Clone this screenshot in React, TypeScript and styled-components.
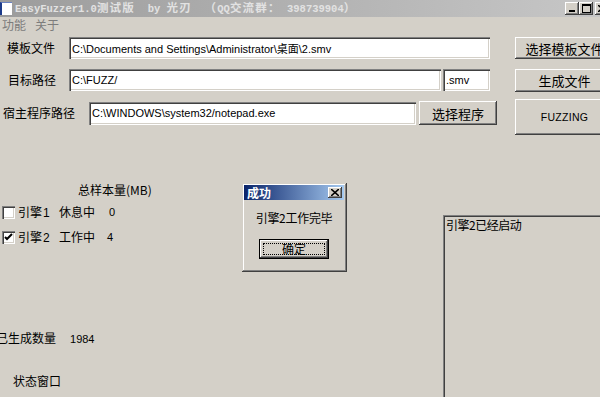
import React from "react";
import styled, { createGlobalStyle } from "styled-components";

const CJK = `"Noto Sans CJK SC", "Liberation Sans", sans-serif`;
const LATIN = `"Liberation Sans", "Noto Sans CJK SC", sans-serif`;

const GlobalStyle = createGlobalStyle`
  html, body { margin: 0; padding: 0; background: #d4d0c8; overflow: hidden; }
  body { font-family: ${LATIN}; }
  * { box-sizing: border-box; }
`;

const Window = styled.div`
  position: relative;
  width: 620px;
  height: 397px;
  overflow: hidden;
  background: #d4d0c8;
  display: flex;
  flex-direction: column;
  font-family: ${CJK};
  font-size: 12px;
  color: #000;
`;

const TitleBar = styled.div`
  height: 17px;
  flex: none;
  display: flex;
  align-items: center;
  padding-right: 11px;
  background: linear-gradient(to right, #9c9c9c, #c8c8c8);
`;

const AppIcon = styled.div`
  width: 12px;
  height: 13px;
  background: #fff;
  border-left: 2px solid #1c3a8a;
  border-top: 1px solid #6a82c0;
  flex: none;
`;

const TitleText = styled.span`
  margin-left: 3px;
  flex: 1;
  font-family: "Liberation Mono", "Noto Sans CJK SC", monospace;
  font-weight: bold;
  font-size: 10.5px;
  line-height: 17px;
  color: #e2e2e2;
  white-space: pre;
`;

const TitleHan = styled.span`
  font-family: "Noto Sans CJK SC", sans-serif;
  font-size: 11.5px;
  letter-spacing: 1.2px;
`;

const CaptionButtons = styled.div`
  display: flex;
  align-items: center;
`;

const CaptionButton = styled.div<{ $gap?: number }>`
  width: 14px;
  height: 13px;
  margin-left: ${(p) => p.$gap ?? 0}px;
  background: #d4d0c8;
  box-shadow: inset -1px -1px #404040, inset 1px 1px #fff, inset -2px -2px #808080;
  display: flex;
  align-items: center;
  justify-content: center;
`;

const MenuBar = styled.div`
  height: 15px;
  flex: none;
  display: flex;
  align-items: center;
  padding-left: 2px;
  gap: 9px;
  font-size: 12px;
  color: #7c7c7c;
`;

const MenuItem = styled.span`
  line-height: 15px;
`;

const TopArea = styled.div`
  display: flex;
  margin-top: 5px;
  height: 98px;
  flex: none;
`;

const LeftForm = styled.div`
  width: 515px;
  display: flex;
  flex-direction: column;
`;

const FormRow = styled.div<{ $top: number; $h: number }>`
  display: flex;
  align-items: center;
  margin-top: ${(p) => p.$top}px;
  height: ${(p) => p.$h}px;
`;

const Label = styled.span<{ $w: number; $pl: number }>`
  width: ${(p) => p.$w}px;
  padding-left: ${(p) => p.$pl}px;
  flex: none;
  font-size: 12px;
  line-height: 16px;
  white-space: nowrap;
`;

const TextBox = styled.div<{ $w: number; $h?: number; $ml?: number }>`
  width: ${(p) => p.$w}px;
  height: ${(p) => p.$h ?? 22}px;
  margin-left: ${(p) => p.$ml ?? 0}px;
  flex: none;
  background: #fff;
  box-shadow: inset 1px 1px #808080, inset 2px 2px #404040, inset -1px -1px #fff,
    inset -2px -2px #d4d0c8;
  padding: 0 3px;
  display: flex;
  align-items: center;
  font-family: ${LATIN};
  font-size: 11px;
  white-space: nowrap;
  overflow: hidden;
`;

const WinButton = styled.div<{ $w: number; $h: number; $ml?: number; $mt?: number; $latin?: boolean }>`
  width: ${(p) => p.$w}px;
  height: ${(p) => p.$h}px;
  margin-left: ${(p) => p.$ml ?? 0}px;
  margin-top: ${(p) => p.$mt ?? 0}px;
  flex: none;
  background: #d4d0c8;
  box-shadow: inset -1px -1px #404040, inset 1px 1px #fff, inset -2px -2px #808080;
  display: flex;
  align-items: center;
  justify-content: center;
  font-family: ${(p) => (p.$latin ? LATIN : CJK)};
  font-size: ${(p) => (p.$latin ? "10.5px" : "13px")};
  letter-spacing: ${(p) => (p.$latin ? "0.3px" : "0")};
  white-space: nowrap;
`;

const RightButtons = styled.div`
  display: flex;
  flex-direction: column;
`;

const LowerArea = styled.div`
  display: flex;
  flex: 1;
  min-height: 0;
`;

const LeftPanel = styled.div`
  width: 443px;
  flex: none;
  display: flex;
  flex-direction: column;
`;

const PlainLine = styled.div<{ $top: number; $pl: number; $ml?: number }>`
  margin-top: ${(p) => p.$top}px;
  margin-left: ${(p) => p.$ml ?? 0}px;
  padding-left: ${(p) => p.$pl}px;
  height: 16px;
  line-height: 16px;
  font-size: 12px;
  white-space: nowrap;
`;

const Num = styled.span<{ $ml: number }>`
  margin-left: ${(p) => p.$ml}px;
  font-family: ${LATIN};
  font-size: 11px;
`;

const EngineRow = styled.div<{ $top: number }>`
  margin-top: ${(p) => p.$top}px;
  height: 20px;
  display: flex;
  align-items: center;
  padding-left: 2px;
  white-space: nowrap;
`;

const CheckBox = styled.div`
  width: 13px;
  height: 13px;
  flex: none;
  background: #fff;
  box-shadow: inset 1px 1px #808080, inset 2px 2px #404040, inset -1px -1px #fff,
    inset -2px -2px #d4d0c8;
  display: flex;
  align-items: center;
  justify-content: center;
`;

const Cell = styled.span<{ $w: number; $ml?: number }>`
  width: ${(p) => p.$w}px;
  margin-left: ${(p) => p.$ml ?? 0}px;
  flex: none;
  font-size: 12px;
  line-height: 16px;
`;

const Digit = styled.span`
  font-family: ${LATIN};
  font-size: 12px;
  margin-left: 1px;
`;

const LogPanel = styled.div`
  margin-top: 80px;
  width: 177px;
  height: 186px;
  flex: none;
  background: #d4d0c8;
  box-shadow: inset 1px 1px #808080, inset 2px 2px #404040, inset -1px -1px #fff,
    inset -2px -2px #d4d0c8;
  padding: 2px;
  display: flex;
`;

const LogText = styled.div`
  flex: 1;
  padding: 0 1px;
  font-size: 12px;
  line-height: 16px;
  letter-spacing: -0.5px;
`;

const ScrollBar = styled.div`
  width: 16px;
  flex: none;
  display: flex;
  flex-direction: column;
  background-image: repeating-conic-gradient(#ffffff 0 25%, #d4d0c8 0 50%);
  background-size: 2px 2px;
`;

const ScrollArrow = styled.div`
  height: 16px;
  background: #d4d0c8;
  box-shadow: inset -1px -1px #404040, inset 1px 1px #fff, inset -2px -2px #808080;
`;

const ScrollTrack = styled.div`
  flex: 1;
`;

const Dialog = styled.div`
  position: absolute;
  left: 242px;
  top: 183px;
  width: 105px;
  height: 89px;
  background: #d4d0c8;
  box-shadow: inset -1px -1px #404040, inset 1px 1px #d4d0c8, inset -2px -2px #808080,
    inset 2px 2px #fff;
  padding: 2px 3px 3px 2px;
  display: flex;
  flex-direction: column;
`;

const DialogTitle = styled.div`
  height: 15px;
  flex: none;
  display: flex;
  align-items: center;
  justify-content: space-between;
  padding: 0 2px 0 3px;
  background: linear-gradient(to right, #0a246a, #a6caf0);
  color: #fff;
  font-weight: bold;
  font-size: 12px;
`;

const DialogClose = styled.div`
  width: 14px;
  height: 11px;
  background: #d4d0c8;
  box-shadow: inset -1px -1px #404040, inset 1px 1px #fff, inset -2px -2px #808080;
  display: flex;
  align-items: center;
  justify-content: center;
`;

const DialogBody = styled.div`
  display: flex;
  flex-direction: column;
  align-items: center;
`;

const DialogMessage = styled.div`
  margin-top: 10px;
  height: 16px;
  line-height: 16px;
  font-size: 12px;
  letter-spacing: -0.3px;
`;

const DefaultButton = styled.div`
  margin-top: 13px;
  width: 70px;
  height: 20px;
  border: 1px solid #000;
  background: #d4d0c8;
  box-shadow: inset -1px -1px #404040, inset 1px 1px #fff, inset -2px -2px #808080;
  padding: 3px;
  display: flex;
`;

const FocusRect = styled.div`
  flex: 1;
  border: 1px dotted #000;
  display: flex;
  align-items: center;
  justify-content: center;
  font-size: 12px;
  line-height: 12px;
`;

const Check = () => (
  <svg width="9" height="9" viewBox="0 0 9 9">
    <path d="M1 4 L3 6 L8 1" stroke="#000" strokeWidth="2" fill="none" />
  </svg>
);

export default function App() {
  return (
    <>
      <GlobalStyle />
      <Window>
        <TitleBar>
          <AppIcon />
          <TitleText>
            {"EasyFuzzer1.0"}
            <TitleHan>测试版</TitleHan>
            {"  by "}
            <TitleHan>光刃</TitleHan>
            {"  "}
            <TitleHan>（</TitleHan>
            {"QQ"}
            <TitleHan>交流群：</TitleHan>
            {" 398739904"}
            <TitleHan>）</TitleHan>
          </TitleText>
          <CaptionButtons>
            <CaptionButton>
              <svg width="8" height="9" viewBox="0 0 8 9">
                <rect x="1" y="6" width="6" height="2" fill="#000" />
              </svg>
            </CaptionButton>
            <CaptionButton>
              <svg width="9" height="9" viewBox="0 0 9 9">
                <rect x="0.5" y="0.5" width="8" height="8" fill="none" stroke="#000" />
                <rect x="0" y="0" width="9" height="2" fill="#000" />
              </svg>
            </CaptionButton>
            <CaptionButton $gap={2}>
              <svg width="8" height="7" viewBox="0 0 8 7">
                <path d="M0 0 L8 7 M8 0 L0 7" stroke="#000" strokeWidth="1.6" />
              </svg>
            </CaptionButton>
          </CaptionButtons>
        </TitleBar>
        <MenuBar>
          <MenuItem>功能</MenuItem>
          <MenuItem>关于</MenuItem>
        </MenuBar>
        <TopArea>
          <LeftForm>
            <FormRow $top={0} $h={22}>
              <Label $w={69} $pl={7}>模板文件</Label>
              <TextBox $w={421}>C:\Documents and Settings\Administrator\桌面\2.smv</TextBox>
            </FormRow>
            <FormRow $top={10} $h={22}>
              <Label $w={69} $pl={8}>目标路径</Label>
              <TextBox $w={372}>C:\FUZZ/</TextBox>
              <TextBox $w={47} $ml={2}>.smv</TextBox>
            </FormRow>
            <FormRow $top={10} $h={24}>
              <Label $w={89} $pl={3}>宿主程序路径</Label>
              <TextBox $w={327} $h={23}>C:\WINDOWS\system32/notepad.exe</TextBox>
              <WinButton $w={78} $h={24} $ml={3}>选择程序</WinButton>
            </FormRow>
          </LeftForm>
          <RightButtons>
            <WinButton $w={99} $h={22}>选择模板文件</WinButton>
            <WinButton $w={99} $h={23} $mt={10}>生成文件</WinButton>
            <WinButton $w={99} $h={36} $mt={7} $latin>FUZZING</WinButton>
          </RightButtons>
        </TopArea>
        <LowerArea>
          <LeftPanel>
            <PlainLine $top={47} $pl={78}>总样本量(MB)</PlainLine>
            <EngineRow $top={4}>
              <CheckBox />
              <Cell $w={41} $ml={3}>引擎<Digit>1</Digit></Cell>
              <Cell $w={50}>休息中</Cell>
              <Num $ml={0}>0</Num>
            </EngineRow>
            <EngineRow $top={5}>
              <CheckBox>
                <Check />
              </CheckBox>
              <Cell $w={41} $ml={3}>引擎<Digit>2</Digit></Cell>
              <Cell $w={48}>工作中</Cell>
              <Num $ml={0}>4</Num>
            </EngineRow>
            <PlainLine $top={83} $pl={0} $ml={-4}>
              已生成数量<Num $ml={14}>1984</Num>
            </PlainLine>
            <PlainLine $top={27} $pl={13}>状态窗口</PlainLine>
          </LeftPanel>
          <LogPanel>
            <LogText>引擎2已经启动</LogText>
            <ScrollBar>
              <ScrollArrow />
              <ScrollTrack />
              <ScrollArrow />
            </ScrollBar>
          </LogPanel>
        </LowerArea>
        <Dialog>
          <DialogTitle>
            <span>成功</span>
            <DialogClose>
              <svg width="8" height="7" viewBox="0 0 8 7">
                <path d="M0 0 L8 7 M8 0 L0 7" stroke="#000" strokeWidth="1.6" />
              </svg>
            </DialogClose>
          </DialogTitle>
          <DialogBody>
            <DialogMessage>引擎2工作完毕</DialogMessage>
            <DefaultButton>
              <FocusRect>确定</FocusRect>
            </DefaultButton>
          </DialogBody>
        </Dialog>
      </Window>
    </>
  );
}
